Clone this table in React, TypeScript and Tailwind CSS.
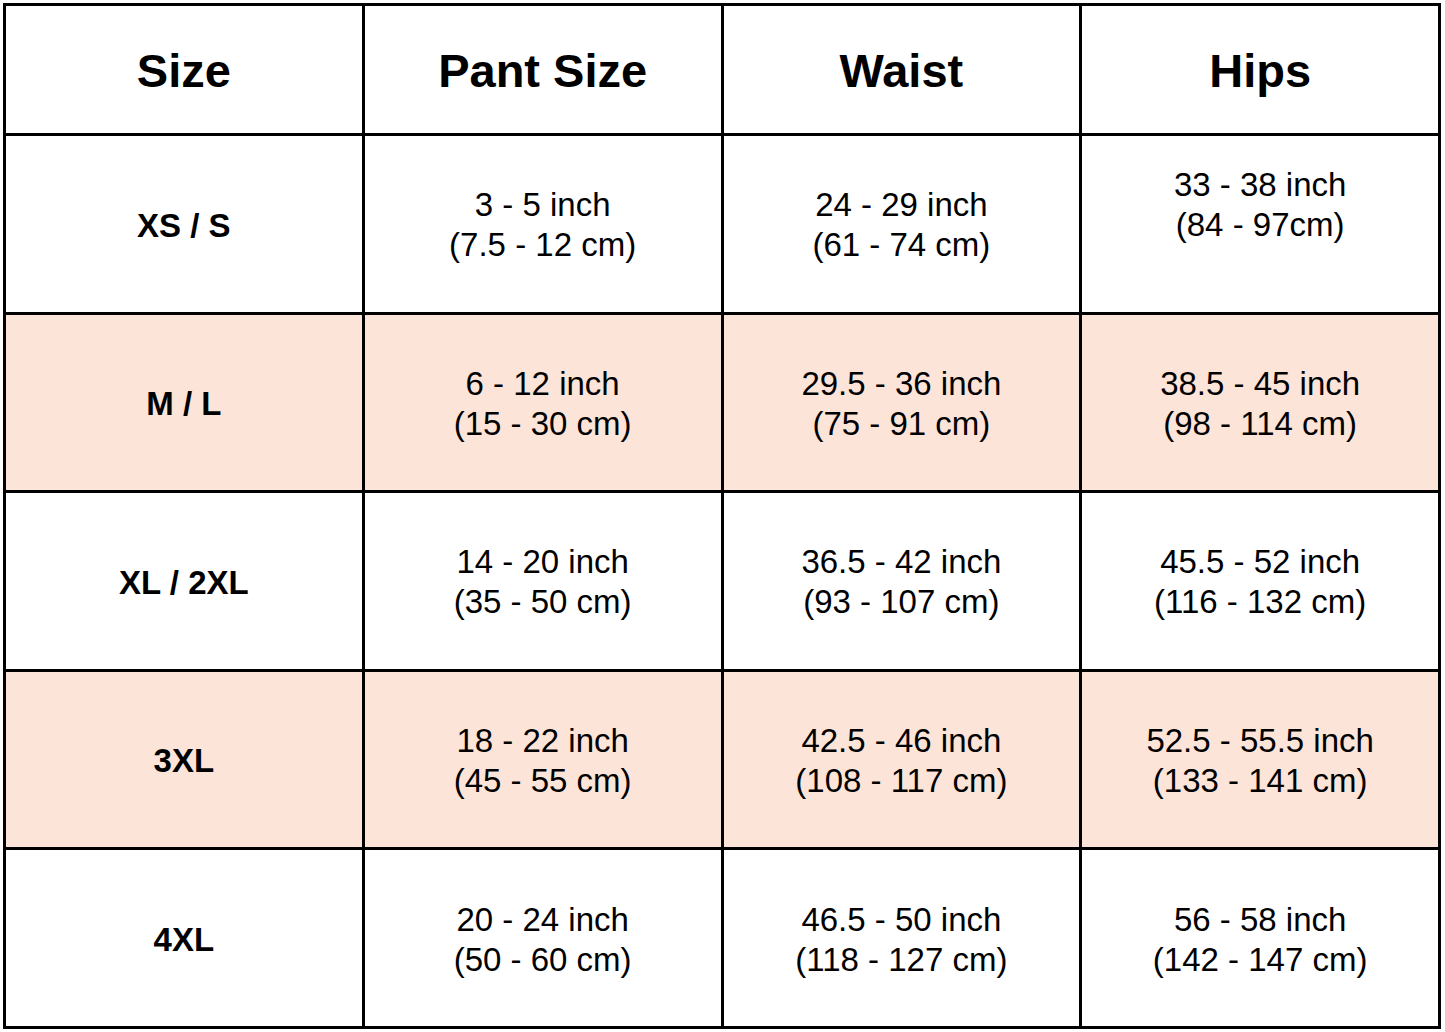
import { Fragment } from 'react';

const headers = ['Size', 'Pant Size', 'Waist', 'Hips'];

type Row = { size: string; cells: string[][]; shaded: boolean };

const rows: Row[] = [
  {
    size: 'XS / S',
    shaded: false,
    cells: [
      ['3 - 5 inch', '(7.5 - 12 cm)'],
      ['24 - 29 inch', '(61 - 74 cm)'],
      ['33 - 38 inch', '(84 - 97cm)', '\u00a0'],
    ],
  },
  {
    size: 'M / L',
    shaded: true,
    cells: [
      ['6 - 12 inch', '(15 - 30 cm)'],
      ['29.5 - 36 inch', '(75 - 91 cm)'],
      ['38.5 - 45 inch', '(98 - 114 cm)'],
    ],
  },
  {
    size: 'XL / 2XL',
    shaded: false,
    cells: [
      ['14 - 20 inch', '(35 - 50 cm)'],
      ['36.5 - 42 inch', '(93 - 107 cm)'],
      ['45.5 - 52 inch', '(116 - 132 cm)'],
    ],
  },
  {
    size: '3XL',
    shaded: true,
    cells: [
      ['18 - 22 inch', '(45 - 55 cm)'],
      ['42.5 - 46 inch', '(108 - 117 cm)'],
      ['52.5 - 55.5 inch', '(133 - 141 cm)'],
    ],
  },
  {
    size: '4XL',
    shaded: false,
    cells: [
      ['20 - 24 inch', '(50 - 60 cm)'],
      ['46.5 - 50 inch', '(118 - 127 cm)'],
      ['56 - 58 inch', '(142 - 147 cm)'],
    ],
  },
];

export default function App() {
  return (
    <div className="w-[1445px] h-[1032px] bg-white p-[3px] font-['Liberation_Sans',Arial,sans-serif] text-black">
      {/* Table: black background shows through the gaps as 3px rules */}
      <div className="grid grid-cols-4 grid-rows-[127px_repeat(5,1fr)] gap-[3px] p-[3px] bg-black w-[1438px] h-[1026px]">
        {headers.map(h => (
          <div key={h} className="bg-white flex items-center justify-center pt-[2px] text-[47px] font-bold leading-none">
            {h}
          </div>
        ))}
        {rows.map(row => (
          <Fragment key={row.size}>
            <div className={`${row.shaded ? 'bg-[#fce4d8]' : 'bg-white'} flex items-center justify-center pt-[3px] text-[33px] font-bold`}>
              {row.size}
            </div>
            {row.cells.map((lines, i) => (
              <div
                key={i}
                className={`${row.shaded ? 'bg-[#fce4d8]' : 'bg-white'} flex flex-col items-center justify-center pt-[3px] text-[33px] leading-[40px]`}
              >
                {lines.map((l, j) => (
                  <span key={j}>{l}</span>
                ))}
              </div>
            ))}
          </Fragment>
        ))}
      </div>
    </div>
  );
}
